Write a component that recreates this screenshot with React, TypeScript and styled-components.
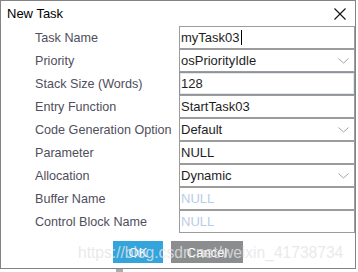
import React from 'react';
import styled, { createGlobalStyle } from 'styled-components';

interface Field {
  label: string;
  value: string;
  select?: boolean;
  placeholder?: boolean;
  focused?: boolean;
  caret?: boolean;
}

const fields: Field[] = [
  { label: 'Task Name', value: 'myTask03', caret: true },
  { label: 'Priority', value: 'osPriorityIdle', select: true },
  { label: 'Stack Size (Words)', value: '128', focused: true },
  { label: 'Entry Function', value: 'StartTask03' },
  { label: 'Code Generation Option', value: 'Default', select: true },
  { label: 'Parameter', value: 'NULL' },
  { label: 'Allocation', value: 'Dynamic', select: true },
  { label: 'Buffer Name', value: 'NULL', placeholder: true },
  { label: 'Control Block Name', value: 'NULL', placeholder: true },
];

const GlobalStyle = createGlobalStyle`
  body {
    margin: 0;
    background: #ffffff;
    font-family: "Liberation Sans", Arial, sans-serif;
    font-size: 13px;
  }
`;

const Chevron = () => (
  <svg width="11" height="6" viewBox="0 0 11 6">
    <path d="M0.5 0.5 L5.5 5 L10.5 0.5" fill="none" stroke="#a4a4a4" strokeWidth="1" />
  </svg>
);

const CloseIcon = () => (
  <svg width="12" height="12" viewBox="0 0 12 12">
    <path d="M0.5 0.5 L11.5 11.5 M11.5 0.5 L0.5 11.5" stroke="#111" strokeWidth="1.1" />
  </svg>
);

export default function App() {
  return (
    <>
      <GlobalStyle />
      <Dialog>
        <TitleBar>
          <Title>New Task</Title>
          <CloseButton>
            <CloseIcon />
          </CloseButton>
        </TitleBar>
        <Form>
          {fields.map((f) => (
            <React.Fragment key={f.label}>
              <Label>{f.label}</Label>
              <InputBox $focused={f.focused}>
                <Value $placeholder={f.placeholder}>{f.value}</Value>
                {f.caret && <Caret />}
                {f.select && (
                  <ChevronWrap>
                    <Chevron />
                  </ChevronWrap>
                )}
              </InputBox>
            </React.Fragment>
          ))}
        </Form>
        <Buttons>
          <Button $kind="primary">OK</Button>
          <Button $kind="secondary">Cancel</Button>
        </Buttons>
        <Watermark>https://blog.csdn.net/weixin_41738734</Watermark>
      </Dialog>
      <Stub />
    </>
  );
}

const Dialog = styled.div`
  position: relative;
  box-sizing: border-box;
  width: 356px;
  height: 269px;
  border: 1px solid #838383;
  background: #ffffff;
  display: flex;
  flex-direction: column;
`;

const TitleBar = styled.div`
  height: 25px;
  display: flex;
  align-items: center;
  justify-content: space-between;
  padding: 0 9px 0 6px;
`;

const Title = styled.div`
  color: #000000;
  font-size: 13px;
`;

const CloseButton = styled.div`
  display: flex;
  align-items: center;
  margin-top: 1px;
`;

const Form = styled.div`
  display: grid;
  grid-template-columns: 178px 176px;
`;

const Label = styled.div`
  height: 23px;
  display: flex;
  align-items: center;
  padding-left: 34px;
  color: #4f4e5c;
  font-size: 12.6px;
  white-space: nowrap;
`;

const InputBox = styled.div<{ $focused?: boolean }>`
  box-sizing: border-box;
  height: 23px;
  display: flex;
  align-items: center;
  border: 1px solid ${(p) => (p.$focused ? '#8e9499' : '#9c9c9c')};
  box-shadow: ${(p) => (p.$focused ? 'inset 0 0 0 1px #e4e8ec' : 'none')};
  padding-left: 1px;
  padding-right: 5px;
`;

const Value = styled.span<{ $placeholder?: boolean }>`
  color: ${(p) => (p.$placeholder ? '#b9cde6' : '#1e1e24')};
  font-size: 13px;
`;

const Caret = styled.span`
  width: 1px;
  height: 15px;
  background: #000000;
  margin-left: 1px;
`;

const ChevronWrap = styled.span`
  margin-left: auto;
  display: flex;
  align-items: center;
`;

const Buttons = styled.div`
  display: flex;
  justify-content: center;
  gap: 8px;
  margin-top: 8px;
`;

const Button = styled.div<{ $kind: 'primary' | 'secondary' }>`
  height: 22px;
  width: ${(p) => (p.$kind === 'primary' ? '50px' : '72px')};
  display: flex;
  align-items: center;
  justify-content: center;
  background: ${(p) => (p.$kind === 'primary' ? '#33a4dc' : '#8c8d8f')};
  color: #ffffff;
  font-size: 13px;
`;

const Watermark = styled.div`
  position: absolute;
  left: 77px;
  top: 241px;
  font-size: 15.6px;
  line-height: 22px;
  color: rgba(228, 228, 228, 0.8);
  white-space: nowrap;
  pointer-events: none;
`;

const Stub = styled.div`
  width: 7px;
  height: 3px;
  margin-left: 116px;
  background: #a9adb1;
`;
